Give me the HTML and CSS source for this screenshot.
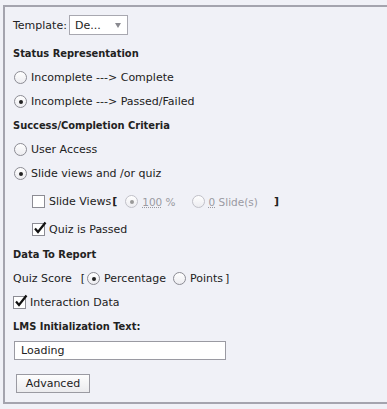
FILE: index.html
```html
<!DOCTYPE html>
<html>
<head>
  <title>Reporting Settings</title>
  <link rel="stylesheet" href="styles.css">
</head>
<body>

  <div class="panel">
    <div class="row template">
      <span>Template:</span>
      <div class="select"><span>De...</span><span class="arrow"></span></div>
    </div>

    <div class="row heading first">Status Representation</div>
    <div class="row"><span class="radio"></span>Incomplete ---&gt; Complete</div>
    <div class="row"><span class="radio on"></span>Incomplete ---&gt; Passed/Failed</div>

    <div class="row heading">Success/Completion Criteria</div>
    <div class="row"><span class="radio"></span>User Access</div>
    <div class="row"><span class="radio on"></span>Slide views and /or quiz</div>

    <div class="row sub gap">
      <span class="check"></span>Slide Views<span class="bracket">[</span>
      <span class="radio on off"></span><span class="dim"><u>100</u> %</span>
      <span class="radio off second"></span><span class="dim"><u>0</u> Slide(s)</span>
      <span class="close">]</span>
    </div>
    <div class="row sub gap">
      <span class="check on">
        <svg width="14" height="14" viewBox="0 0 14 14"><path d="M2 7.5 L5 11 L12.5 1.5" fill="none" stroke="#111" stroke-width="2.2"/></svg>
      </span>Quiz is Passed
    </div>

    <div class="row heading tight">Data To Report</div>
    <div class="row">
      Quiz Score<span class="open">[</span>
      <span class="radio on"></span>Percentage
      <span class="radio second2"></span>Points<span class="end">]</span>
    </div>
    <div class="row">
      <span class="check on">
        <svg width="14" height="14" viewBox="0 0 14 14"><path d="M2 7.5 L5 11 L12.5 1.5" fill="none" stroke="#111" stroke-width="2.2"/></svg>
      </span>Interaction Data
    </div>
    <div class="row heading">LMS Initialization Text:</div>

    <div class="textbox">Loading</div>
    <div class="button">Advanced</div>
  </div>

</body>
</html>
```

FILE: styles.css
```css
/* Reporting panel */
body {
  margin: 0;
  background: #f0f1f7;
  font-family: "DejaVu Sans", sans-serif;
  font-size: 11px;
  color: #222;
  overflow: hidden;
}
.panel {
  margin: 5px 0 0 3px;
  width: 374px;
  height: 395px;
  border: 2px solid #a4a4ae;
  border-right: none;
  padding-left: 8px;
}
.row {
  display: flex;
  align-items: center;
  height: 24px;
  padding-top: 1px;
  box-sizing: border-box;
  white-space: nowrap;
}
.template {
  margin-top: 8px;
  height: 20px;
  padding-top: 0;
}
.select {
  display: flex;
  align-items: center;
  justify-content: space-between;
  margin-left: 2px;
  width: 46px;
  height: 18px;
  padding: 0 6px 0 5px;
  border: 1px solid #a8a8b0;
  background: #fff;
}
.arrow {
  width: 0; height: 0;
  border-left: 3.5px solid transparent;
  border-right: 3.5px solid transparent;
  border-top: 5px solid #8a8a90;
}
.heading {
  font-family: "DejaVu Sans Condensed", "DejaVu Sans", sans-serif;
  font-weight: bold;
}
.heading.first { margin-top: 6px; }
.heading.tight { margin-top: 1px; }
.gap { margin-top: 4px; }
.sub { padding-left: 19px; }

.radio {
  width: 11px;
  height: 11px;
  border: 1px solid #8c8c94;
  border-radius: 50%;
  background: linear-gradient(#fff, #ececf0);
  margin: 0 4px 0 1px;
  display: flex;
  align-items: center;
  justify-content: center;
  flex: none;
}
.radio.on::after {
  content: "";
  width: 4px;
  height: 4px;
  border-radius: 50%;
  background: #222;
}
.radio.off {
  border-color: #c0c0c8;
}
.radio.off.on::after { background: #999; }
.radio.second { margin-left: 16px; }
.radio.second2 { margin-left: 7px; }

.check {
  width: 11px;
  height: 11px;
  border: 1px solid #8c8c94;
  background: #fff;
  margin-right: 4px;
  position: relative;
  flex: none;
}
.check svg {
  position: absolute;
  left: 0;
  top: -3px;
}
.bracket { margin: 0 7px 0 1px; font-weight: bold; }
.open { margin: 0 1px 0 9px; }
.end { margin-left: 2px; }
.close { margin-left: 16px; font-weight: bold; }
.dim { color: #9a9aa2; font-size: 10.5px; }
.dim u {
  text-decoration: underline dotted;
}

.textbox {
  margin: 3px 0 0 1px;
  width: 204px;
  height: 17px;
  line-height: 17px;
  padding-left: 6px;
  border: 1px solid #9a9aa2;
  background: #fff;
}
.button {
  margin: 14px 0 0 3px;
  width: 72px;
  height: 17px;
  line-height: 17px;
  text-align: center;
  border: 1px solid #9a9aa2;
  background: linear-gradient(#fdfdfd, #ebebee);
}
```
